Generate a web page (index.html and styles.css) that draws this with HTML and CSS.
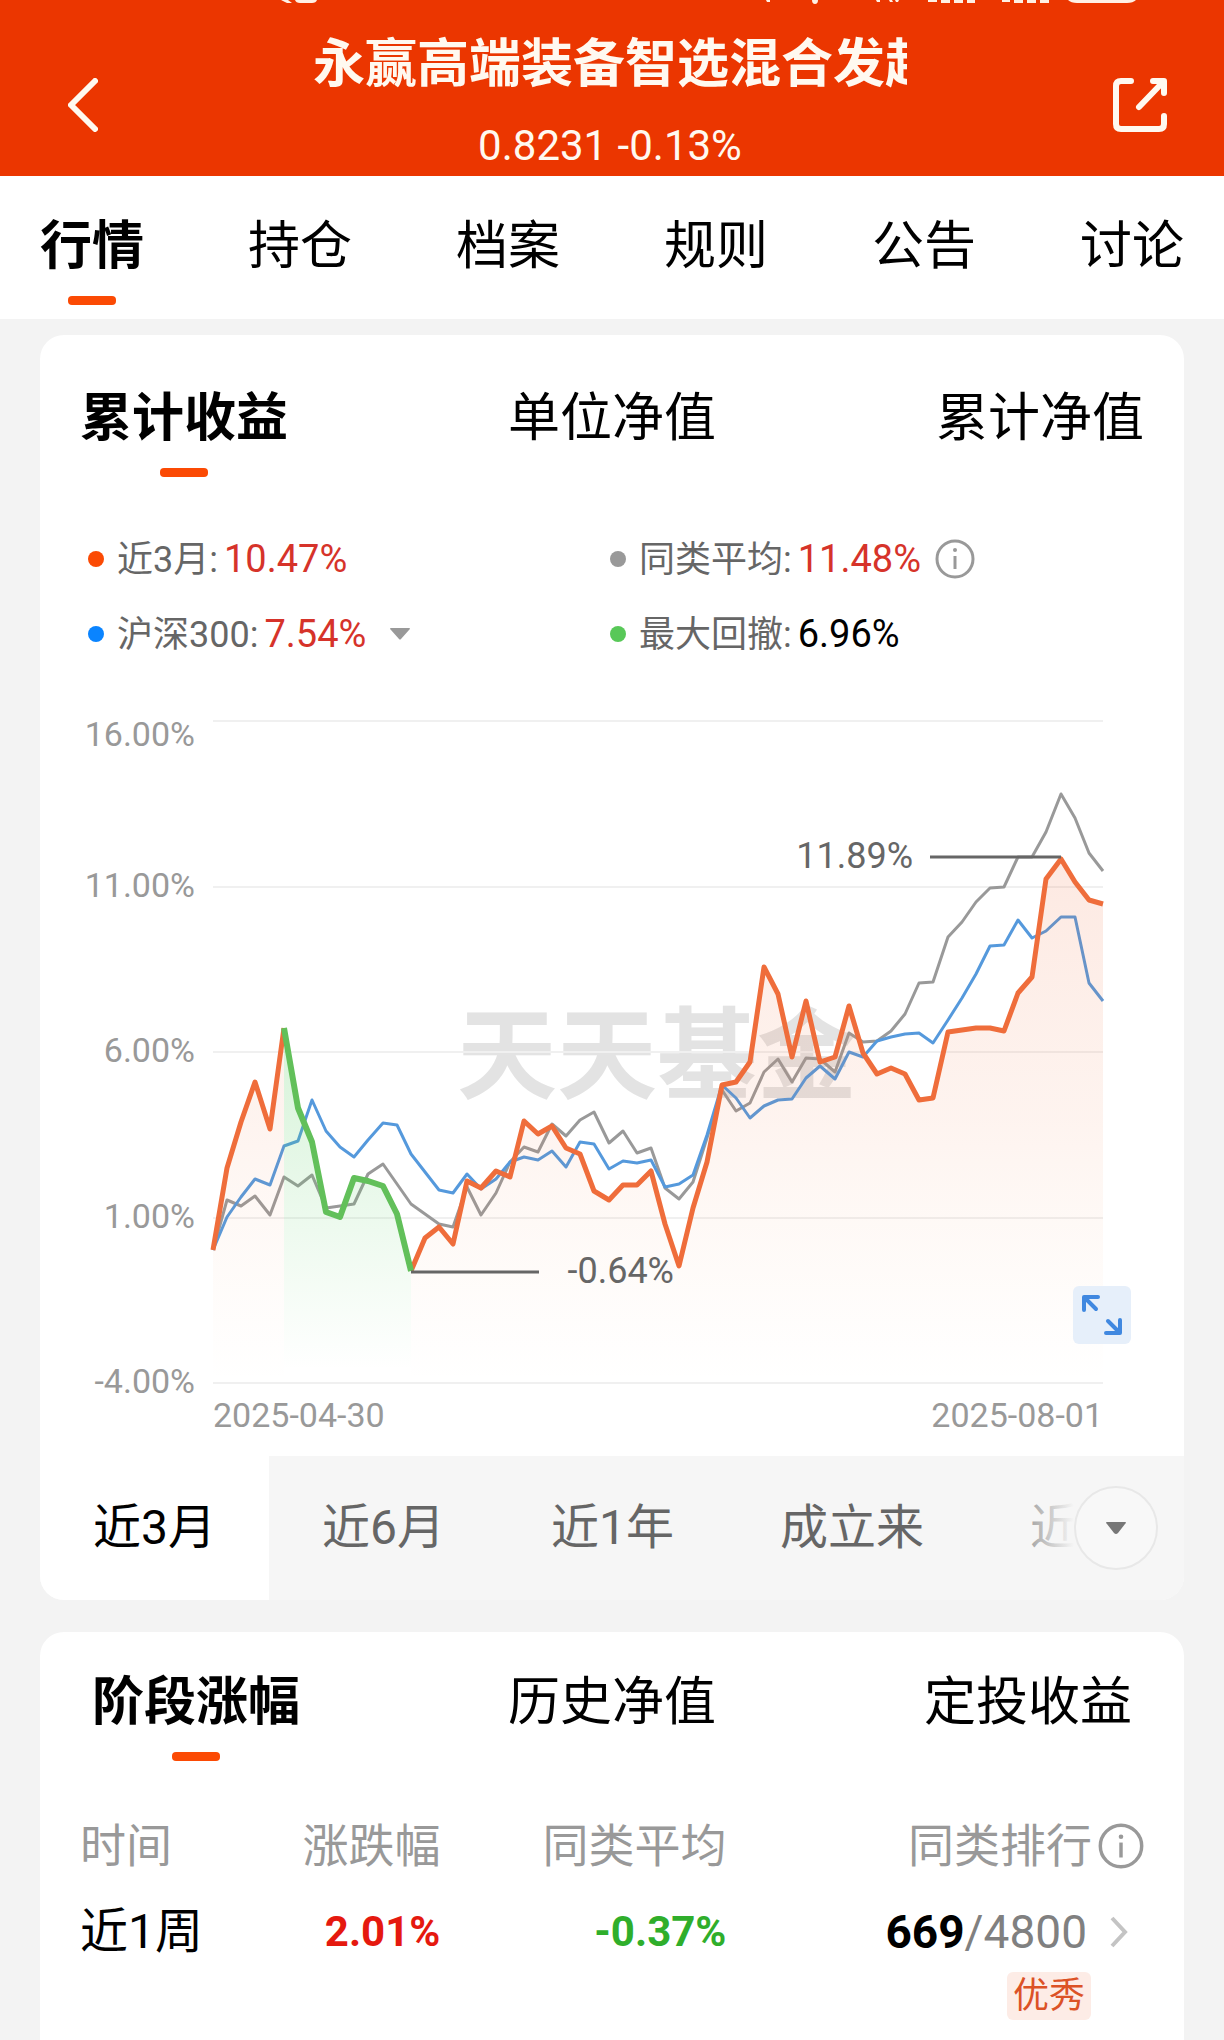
FILE: index.html
```html
<!DOCTYPE html>
<html lang="zh-CN">
<head>
  <meta charset="UTF-8">
  <meta name="viewport" content="width=device-width, initial-scale=1">
  <title>永赢高端装备智选混合发起</title>
  <link rel="stylesheet" href="styles.css">
</head>
<body>
  <header class="header">
    <svg class="status" viewBox="0 0 1224 6" aria-hidden="true">
      <path d="M281 0h7l4 3h-5zM295 0h22q-1 3-5 3h-12q-4 0-5-3zM766 0h4v2h-3zM812 0h6q0 4-3 4t-3-4zM876 0h4v2h-3zM889 0h3l1 2h-3zM895 0h4l-1 2h-2z"/>
      <path d="M928 0h9v2h-9zM941 0h9v3h-9zM954 0h9v3h-9zM967 0h8v3h-8zM1002 0h8v2h-8zM1014 0h9v3h-9zM1027 0h9v3h-9zM1040 0h9v3h-9zM1068 0h68q-3 3-9 3h-50q-6 0-9-3z"/>
    </svg>
    <div class="header-bar">
      <a class="icon-link back" href="#" aria-label="返回">
        <svg width="30" height="54" viewBox="0 0 30 54"><path d="M27 3 3 27l24 24"/></svg>
      </a>
      <div class="header-text">
        <h1 class="fund-name">永赢高端装备智选混合发起</h1>
        <p class="fund-value">0.8231 -0.13%</p>
      </div>
      <a class="icon-link" href="#" aria-label="分享">
        <svg width="56" height="56" viewBox="0 0 56 56"><path d="M19 4H9Q4 4 4 9v38q0 5 5 5h38q5 0 5-5V39M41 4h11v12M51 5 27 30"/></svg>
      </a>
    </div>
  </header>

  <nav class="tabs main-tabs">
    <button class="tab active">行情</button>
    <button class="tab">持仓</button>
    <button class="tab">档案</button>
    <button class="tab">规则</button>
    <button class="tab">公告</button>
    <button class="tab">讨论</button>
  </nav>

  <main class="content">
    <section class="card">
      <div class="tabs chart-tabs">
        <button class="tab active">累计收益</button>
        <button class="tab">单位净值</button>
        <button class="tab">累计净值</button>
      </div>

      <div class="legend">
        <div class="legend-item">
          <span class="dot dot-fund"></span>
          <span>近3月:<b class="value up">10.47%</b></span>
        </div>
        <div class="legend-item">
          <span class="dot dot-avg"></span>
          <span>同类平均:<b class="value up">11.48%</b></span>
          <button class="plain-btn" aria-label="说明">
            <svg class="info" width="40" height="40" viewBox="0 0 40 40"><circle cx="20" cy="20" r="18"/><circle class="info-dot" cx="20" cy="11" r="2"/><path d="M20 17v13"/></svg>
          </button>
        </div>
        <div class="legend-item">
          <span class="dot dot-index"></span>
          <span>沪深300:<b class="value up">7.54%</b></span>
          <button class="plain-btn index-btn" aria-label="选择指数">
            <svg width="20" height="12" viewBox="0 0 20 12"><path d="M1 0h18q2 0 0 2l-8 9q-1 1-2 0L1 2q-2-2 0-2z" fill="#999"/></svg>
          </button>
        </div>
        <div class="legend-item">
          <span class="dot dot-drawdown"></span>
          <span>最大回撤:<b class="value">6.96%</b></span>
        </div>
      </div>

      <div class="chart">
        <svg class="chart-svg" viewBox="40 656 1144 800" role="img" aria-label="累计收益走势">
          <defs>
            <linearGradient id="fundFill" gradientUnits="userSpaceOnUse" x1="0" y1="859" x2="0" y2="1382">
              <stop offset="0" stop-color="#f0622e" stop-opacity=".14"/>
              <stop offset=".5" stop-color="#f0703a" stop-opacity=".08"/>
              <stop offset="1" stop-color="#f6a05a" stop-opacity="0"/>
            </linearGradient>
            <linearGradient id="drawdownFill" gradientUnits="userSpaceOnUse" x1="0" y1="1028" x2="0" y2="1370">
              <stop offset="0" stop-color="#5fd068" stop-opacity=".26"/>
              <stop offset="1" stop-color="#5fd068" stop-opacity="0"/>
            </linearGradient>
          </defs>

          <text class="watermark" x="657" y="1091">天天基金</text>

          <g class="grid">
            <path d="M213 721H1103M213 887H1103M213 1052H1103M213 1218H1103M213 1383H1103"/>
          </g>

          <g class="axis">
            <text x="195" y="746" text-anchor="end">16.00%</text>
            <text x="195" y="897" text-anchor="end">11.00%</text>
            <text x="195" y="1062" text-anchor="end">6.00%</text>
            <text x="195" y="1228" text-anchor="end">1.00%</text>
            <text x="195" y="1393" text-anchor="end">-4.00%</text>
            <text x="213" y="1427">2025-04-30</text>
            <text x="1103" y="1427" text-anchor="end">2025-08-01</text>
          </g>

          <!-- 同类平均 -->
          <polyline class="line line-avg" points="213,1250 227,1200 241,1206 255,1196 270,1215 284,1177 298,1186 312,1175 326,1208 340,1206 354,1204 368,1174 383,1164 397,1184 411,1204 425,1214 439,1224 453,1227 467,1187 481,1215 496,1193 510,1162 524,1147 538,1152 552,1124 566,1136 580,1120 594,1112 609,1143 623,1131 637,1153 651,1148 665,1188 679,1199 693,1182 707,1138 722,1090 736,1111 750,1103 764,1072 778,1059 792,1082 806,1058 820,1059 835,1072 849,1033 863,1042 877,1041 891,1031 905,1014 919,983 933,982 948,937 962,922 976,902 990,888 1004,887 1018,857 1032,857 1046,832 1061,794 1075,818 1089,853 1103,871"/>
          <!-- 沪深300 -->
          <polyline class="line line-index" points="213,1250 227,1217 241,1197 255,1179 270,1185 284,1146 298,1141 312,1100 326,1131 340,1147 354,1157 368,1140 383,1123 397,1125 411,1154 425,1172 439,1190 453,1193 467,1174 481,1189 496,1179 510,1162 524,1157 538,1160 552,1151 566,1167 580,1142 594,1144 609,1169 623,1161 637,1163 651,1160 665,1187 679,1184 693,1175 707,1135 722,1085 736,1098 750,1118 764,1106 778,1100 792,1099 806,1078 820,1066 835,1079 849,1052 863,1057 877,1041 891,1037 905,1034 919,1033 933,1043 948,1020 962,998 976,974 990,946 1004,945 1018,920 1032,938 1046,931 1061,917 1075,917 1089,983 1103,1001"/>

          <!-- 本基金 -->
          <path fill="url(#fundFill)" d="M213 1383V1250L227 1168 241 1122 255 1082 270 1129 284 1028V1383zM411 1383V1271L425 1238 439 1227 453 1244 467 1181 481 1188 496 1171 510 1177 524 1121 538 1134 552 1126 566 1148 580 1154 594 1191 609 1200 623 1185 637 1185 651 1171 665 1224 679 1266 693 1208 707 1162 722 1085 736 1082 750 1062 764 967 778 994 792 1057 806 1001 820 1062 835 1057 849 1006 863 1053 877 1074 891 1068 905 1074 919 1100 933 1098 948 1032 962 1030 976 1028 990 1028 1004 1031 1018 993 1032 977 1046 879 1061 859 1075 882 1089 900 1103 904V1383z"/>
          <path fill="url(#drawdownFill)" d="M284 1383V1028L298 1108 312 1142 326 1212 340 1217 354 1178 368 1181 383 1186 397 1214 411 1271V1383z"/>
          <polyline class="line line-fund" points="213,1250 227,1168 241,1122 255,1082 270,1129 284,1028"/>
          <polyline class="line line-fund" points="411,1271 425,1238 439,1227 453,1244 467,1181 481,1188 496,1171 510,1177 524,1121 538,1134 552,1126 566,1148 580,1154 594,1191 609,1200 623,1185 637,1185 651,1171 665,1224 679,1266 693,1208 707,1162 722,1085 736,1082 750,1062 764,967 778,994 792,1057 806,1001 820,1062 835,1057 849,1006 863,1053 877,1074 891,1068 905,1074 919,1100 933,1098 948,1032 962,1030 976,1028 990,1028 1004,1031 1018,993 1032,977 1046,879 1061,859 1075,882 1089,900 1103,904"/>
          <polyline class="line line-drawdown" points="284,1028 298,1108 312,1142 326,1212 340,1217 354,1178 368,1181 383,1186 397,1214 411,1271"/>

          <g class="marker">
            <path d="M930 857H1061M411 1272H539"/>
            <text x="913" y="868" text-anchor="end">11.89%</text>
            <text x="674" y="1283" text-anchor="end">-0.64%</text>
          </g>
        </svg>
        <button class="expand-btn" aria-label="全屏">
          <svg width="58" height="58" viewBox="0 0 58 58"><path d="M11 24V11h14M12 12l11 11M47 34v13H33M46 46 35 35"/></svg>
        </button>
      </div>

      <div class="ranges">
        <button class="range active">近3月</button>
        <button class="range">近6月</button>
        <button class="range">近1年</button>
        <button class="range">成立来</button>
        <button class="range">近</button>
        <div class="range-more">
          <button class="more-btn" aria-label="更多区间">
            <svg width="20" height="12" viewBox="0 0 20 12"><path d="M1 0h18q2 0 0 2l-7 9q-2 2-4 0L1 2q-2-2 0-2z" fill="#777"/></svg>
          </button>
        </div>
      </div>
    </section>

    <section class="card card-last">
      <div class="tabs stage-tabs">
        <button class="tab active">阶段涨幅</button>
        <button class="tab">历史净值</button>
        <button class="tab">定投收益</button>
      </div>

      <table class="stage-table">
        <thead>
          <tr>
            <th class="col-time">时间</th>
            <th class="col-change">涨跌幅</th>
            <th class="col-avg">同类平均</th>
            <th class="col-rank">
              <div class="rank-head">同类排行
                <svg class="info" width="46" height="46" viewBox="0 0 40 40"><circle cx="20" cy="20" r="18"/><circle class="info-dot" cx="20" cy="12" r="2"/><path d="M20 17v13"/></svg>
              </div>
            </th>
          </tr>
        </thead>
        <tbody>
          <tr>
            <td class="period">近1周</td>
            <td class="percent rise">2.01%</td>
            <td class="percent fall">-0.37%</td>
            <td>
              <a class="rank" href="#">
                <span><b>669</b>/4800</span>
                <svg width="18" height="32" viewBox="0 0 18 32"><path d="M2 2l13 14L2 30"/></svg>
              </a>
              <span class="badge">优秀</span>
            </td>
          </tr>
        </tbody>
      </table>
    </section>
  </main>
</body>
</html>
```
FILE: styles.css
```css
* { box-sizing: border-box; }
body {
  margin: 0;
  min-height: 100vh;
  display: flex;
  flex-direction: column;
  background: #f3f3f3;
  color: #000;
  font-family: Roboto, "Noto Sans CJK SC", sans-serif;
}
button {
  border: 0;
  padding: 0;
  background: none;
  color: inherit;
  font: inherit;
  cursor: pointer;
}
svg { display: block; }

/* header */
.header { background: #eb3600; color: #fff9f0; padding-bottom: 6px; }
.status { width: 100%; fill: #fff0e4; }
.header-bar {
  display: flex;
  align-items: center;
  justify-content: space-between;
  padding: 27px 56px 0 68px;
}
.icon-link { padding-top: 6px; }
.icon-link.back { padding-right: 10px; }
.icon-link svg {
  fill: none;
  stroke: #fff9f0;
  stroke-width: 6;
  stroke-linecap: round;
  stroke-linejoin: round;
}
.header-text { width: 54%; text-align: center; }
.fund-name {
  margin: 0 0 25px;
  overflow: hidden;
  white-space: nowrap;
  text-align: left;
  font-size: 52px;
  line-height: 64px;
}
.fund-value { margin: 0; font-size: 42px; line-height: 48px; }

/* tabs */
.tabs { display: flex; justify-content: space-between; }
.tab {
  display: flex;
  flex-direction: column;
  align-items: center;
  gap: 17px;
  font-size: 52px;
  line-height: 64px;
}
.tab::after {
  content: "";
  width: 48px;
  height: 9px;
  border-radius: 4px;
}
.tab.active { font-weight: bold; }
.tab.active::after { background: #fb4a04; }
.main-tabs { background: #fff; padding: 39px 40px 14px; }
.chart-tabs { padding: 52px 40px 60px; }
.stage-tabs { padding: 39px 52px 53px; }

.content {
  flex: 1;
  display: flex;
  flex-direction: column;
  gap: 32px;
  padding: 16px 40px 0;
}
.card { background: #fff; border-radius: 24px; overflow: hidden; }
.card-last { flex: 1; border-radius: 24px 24px 0 0; }

/* legend */
.legend {
  display: grid;
  grid-template-columns: 1fr 1fr;
  row-gap: 31px;
  padding: 0 52px 0 48px;
  color: #666;
  font-size: 36px;
  line-height: 44px;
}
.legend-item { display: flex; align-items: center; height: 44px; }
.dot { width: 16px; height: 16px; margin-right: 13px; border-radius: 50%; }
.dot-fund { background: #fb4a04; }
.dot-avg { background: #999; }
.dot-index { background: #0a84ff; }
.dot-drawdown { background: #58c858; }
.value { margin-left: 6px; color: #000; font-size: 38px; font-weight: normal; }
.value.up { color: #d6332a; }
.plain-btn { margin-left: 14px; }
.index-btn { margin-left: 24px; }
.info { fill: none; stroke: #999; stroke-width: 3; }
.info-dot { fill: #999; stroke: none; }

/* chart */
.chart { position: relative; }
.chart-svg { width: 100%; height: auto; }
.watermark {
  fill: #e3e3e3;
  font-size: 100px;
  font-weight: bold;
  text-anchor: middle;
}
.grid { stroke: #f0f0f0; stroke-width: 2; }
.axis { fill: #999; font-size: 34px; }
.line { fill: none; stroke-width: 3; stroke-linejoin: round; }
.line-avg { stroke: #999; }
.line-index { stroke: #5599dc; }
.line-fund { stroke: #ef6d3b; stroke-width: 5; }
.line-drawdown { stroke: #62c05a; stroke-width: 6; }
.marker { stroke: #666; stroke-width: 3; }
.marker text { fill: #666; stroke: none; font-size: 36px; }
.expand-btn {
  position: absolute;
  right: 53px;
  bottom: 112px;
  border-radius: 6px;
  background: #e6effa;
}
.expand-btn svg {
  fill: none;
  stroke: #4088e0;
  stroke-width: 4;
  stroke-linecap: round;
  stroke-linejoin: round;
}

/* date ranges */
.ranges { position: relative; display: flex; overflow: hidden; background: #f6f6f6; }
.range {
  flex: none;
  padding: 0 53px;
  color: #666;
  font-size: 48px;
  line-height: 144px;
}
.range.active { background: #fff; color: #000; }
.range-more {
  position: absolute;
  top: 0;
  right: 0;
  bottom: 0;
  display: flex;
  align-items: center;
  padding: 0 26px 0 80px;
  background: linear-gradient(to right, #f6f6f600, #f6f6f6 80px);
}
.more-btn {
  display: flex;
  align-items: center;
  justify-content: center;
  width: 84px;
  height: 84px;
  border: 2px solid #e8e8e8;
  border-radius: 50%;
  background: #f8f8f8;
}

/* stage table */
.stage-table {
  width: 100%;
  table-layout: fixed;
  border-collapse: collapse;
  line-height: 64px;
}
.stage-table th {
  padding: 0;
  color: #999;
  font-size: 46px;
  font-weight: normal;
  text-align: right;
}
.stage-table td { padding: 22px 0 0; vertical-align: top; text-align: right; }
.stage-table th:first-child, .stage-table td:first-child { padding-left: 40px; text-align: left; }
.stage-table th:last-child, .stage-table td:last-child { padding-right: 40px; }
.col-time { width: 18%; }
.col-change { width: 17%; }
.col-avg { width: 25%; }
.col-rank { width: 40%; }
.rank-head { display: flex; align-items: center; justify-content: flex-end; gap: 6px; }
.period { font-size: 48px; }
.percent { font-size: 42px; font-weight: bold; }
.rise { color: #e5190f; }
.fall { color: #2fae2b; }
.rank {
  display: flex;
  align-items: center;
  justify-content: flex-end;
  gap: 23px;
  padding-right: 16px;
  color: #808080;
  font-size: 46px;
  text-decoration: none;
}
.rank b { color: #000; }
.rank svg { fill: none; stroke: #c4c4c4; stroke-width: 4; }
.badge {
  display: block;
  width: fit-content;
  margin: 8px 53px 0 auto;
  padding: 0 6px;
  border-radius: 6px;
  background: #fdece6;
  color: #dc5226;
  font-size: 36px;
  line-height: 48px;
}
```
